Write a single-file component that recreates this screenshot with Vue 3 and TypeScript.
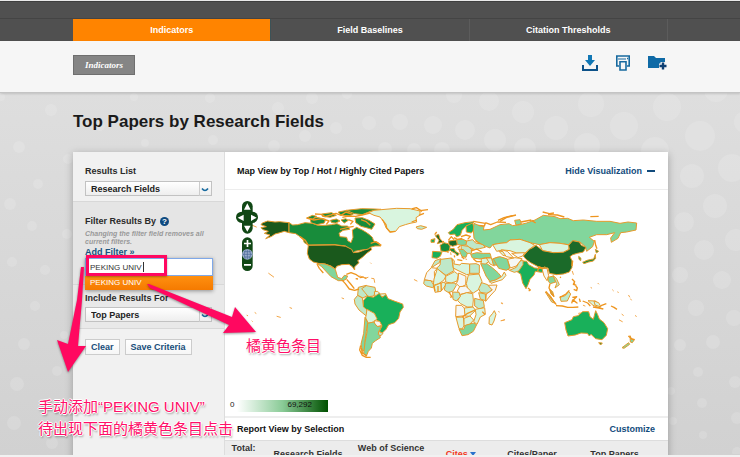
<script setup lang="ts">
import { ref } from 'vue'

interface Shape { d: string; f: string }
interface Region { x: number; y: number; shapes: Shape[]; lines: string[]; islands: string[] }

const DARK = '#1a591c'
const DEEP = '#1b6a29'
const GREEN = '#188c3b'
const MID = '#19b05a'
const SOFT = '#82d69c'
const PALE = '#bfe8c9'
const FAINT = '#d9f5df'
const NONE = '#f5f7f5'

const tabs = ['Indicators', 'Field Baselines', 'Citation Thresholds']
const activeTab = ref('Indicators')
const filterText = ref('PEKING UNIV')
const resultsList = ref('Research Fields')
const includeFor = ref('Top Papers')

const dots: number[][] = [
  [1, 97, 4], [51, 110, 6], [134, 97, 4], [210, 98, 5], [278, 108, 6], [312, 98, 6], [347, 94, 5], [19, 147, 6], [100, 126, 5],
  [145, 143, 4], [213, 140, 5], [305, 136, 6], [336, 128, 6], [274, 146, 6], [369, 123, 7], [400, 122, 8],
  [433, 125, 9], [454, 95, 8], [465, 130, 10], [489, 101, 10], [523, 112, 11], [556, 128, 12], [591, 104, 13],
  [624, 126, 14], [667, 107, 14], [700, 136, 15], [716, 90, 12], [495, 140, 11], [525, 149, 11], [587, 146, 13],
  [655, 151, 14], [385, 149, 7], [414, 150, 7], [442, 150, 8], [745, 122, 11],
  [68, 159, 5], [38, 184, 5], [10, 204, 6], [67, 234, 5], [32, 226, 5], [12, 262, 5], [45, 270, 5], [35, 306, 5], [24, 344, 6],
  [57, 371, 5], [17, 384, 7], [14, 423, 7], [52, 443, 6], [64, 335, 4],
  [692, 176, 12], [732, 168, 14], [715, 206, 12], [684, 222, 10], [736, 240, 11], [704, 250, 10], [680, 275, 8],
  [722, 280, 9], [696, 308, 8], [734, 318, 8], [713, 342, 7], [680, 345, 6], [698, 372, 5], [735, 382, 6],
  [671, 391, 4], [702, 403, 5], [737, 418, 6], [673, 421, 4], [703, 435, 4], [737, 452, 5],
]

const regions: Region[] = [
  {
    x: 0, y: 0,
    shapes: [
      { d: 'M112 99L128 93L150 96L164 95L192 98L192 128L178 124L165 128L150 132L140 139L122 146L135 135L118 130L130 124L114 119L108 113L124 110L108 104Z', f: DARK },
      { d: 'M192 98L203 105L218 104L240 98L262 100L278 106L300 106L320 104L336 101L350 108L368 108L374 118L354 121L342 130L345 140L365 142L368 152L378 158L384 142L382 120L395 112L412 120L422 126L432 133L442 142L446 153L460 158L468 168L450 168L436 172L430 178L410 180L390 184L384 190L378 180L362 168L330 164L250 165L238 158L234 148L225 140L212 131L192 128Z', f: GREEN },
      { d: 'M250 166L330 165L362 169L380 178L385 188L402 186L418 180L430 177L437 172L440 179L425 190L412 202L398 212L402 218L389 230L389 240L382 230L372 223L350 224L335 229L331 237L318 228L300 222L280 220L265 216L253 207L247 190Z', f: DARK },
      { d: 'M276 220L300 222L315 228L331 238L338 262L350 266L358 256L368 258L363 268L354 272L340 272L318 260L302 243L290 230Z', f: SOFT },
      { d: 'M256 88L276 82L302 88L298 99L276 104L258 98Z', f: GREEN },
      { d: 'M245 84L262 76L275 79L262 87Z', f: GREEN },
      { d: 'M290 72L320 68L334 76L316 82L292 79Z', f: GREEN },
      { d: 'M340 66L366 61L390 69L374 78L346 75Z', f: GREEN },
      { d: 'M364 61L410 56L450 57L468 58L436 64L412 74L388 71Z', f: GREEN },
      { d: 'M390 84L412 83L432 91L450 102L440 118L424 113L408 109L392 98Z', f: GREEN },
      { d: 'M316 91L334 87L345 93L332 99L320 98Z', f: GREEN },
      { d: 'M348 90L362 86L370 91L358 99Z', f: GREEN },
      { d: 'M400 292L424 286L432 298L428 316L414 324L398 316Z', f: PALE },
      { d: 'M410 296L424 287L450 292L452 304L446 318L430 320L420 308Z', f: PALE },
      { d: 'M448 305L458 304L466 312L482 311L484 320L450 322Z', f: FAINT },
      { d: 'M388 328L398 316L412 324L416 350L426 360L424 378L402 360L390 342Z', f: PALE },
      { d: 'M415 332L427 318L445 322L463 310L471 322L483 314L489 326L510 334L533 342L535 352L525 366L521 385L509 398L491 404L483 418L471 430L463 424L471 408L465 397L453 388L449 372L429 362L415 350Z', f: MID },
      { d: 'M426 358L448 370L456 386L446 396L430 400L422 384Z', f: FAINT },
      { d: 'M448 392L464 394L470 406L458 410L448 400Z', f: NONE },
      { d: 'M420 382L428 398L424 424L420 452L420 478L412 484L408 462L416 430Z', f: SOFT },
      { d: 'M428 400L446 396L456 409L469 409L462 424L466 443L452 452L442 460L439 474L430 484L424 498L416 490L420 458L426 426Z', f: SOFT },
      { d: 'M461 424L474 430L468 437L460 434Z', f: PALE },
    ],
    lines: [
      'M276 222L283 235L295 249', 'M350 269L361 281L373 297L389 301L402 297M365 268L377 282L388 296', 'M364 253L378 248L394 254L405 262',
      'M405 263L414 261L424 266M392 266L399 267', 'M407 466L404 480L412 496L424 502L437 502M409 474L412 489L426 498',
      'M245 84L267 90L290 86L312 93L304 103M270 72L290 73L300 80L318 75L333 70L348 76L363 66L380 72',
      'M352 82L370 78L392 79L411 75L432 70L461 64M408 89L424 95L436 106M370 89L384 94L376 103',
      'M225 140L241 151L250 166M345 118L366 113L386 109M437 160L452 155L469 166',
    ],
    islands: ['M80 105L94 111', 'M131 250L146 261', 'M66 376L68 377M90 368L93 370M81 393L82 394M156 379L166 382M195 353L200 355', 'M351 324L356 326'],
  },
  {
    x: 405, y: 0,
    shapes: [
      { d: 'M25 68L42 61L75 58L110 55L150 56L180 63L180 75L168 83L170 96L150 100L136 104L118 110L107 124L90 126L78 113L70 93L60 81L42 76Z', f: FAINT },
      { d: 'M168 111L182 107L200 112L185 118L172 116Z', f: PALE },
      { d: 'M226 137L236 133L240 146L249 156L232 161L237 151Z', f: DEEP },
      { d: 'M213 149L225 146L223 157L213 157Z', f: MID },
      { d: 'M265 128L280 118L291 104L315 98L342 95L335 104L318 108L306 121L301 136L290 141L284 132L270 134Z', f: MID },
      { d: 'M318 108L338 99L343 118L334 129L319 126Z', f: MID },
      { d: 'M240 166L252 158L264 161L270 169L269 182L256 185L243 183Z', f: GREEN },
      { d: 'M266 153L289 150L293 164L278 169L267 164Z', f: DEEP },
      { d: 'M218 184L246 186L241 199L231 205L216 203Z', f: MID },
      { d: 'M267 177L282 175L286 184L298 191L292 198L286 190L274 184Z', f: GREEN },
      { d: 'M290 149L309 148L322 154L318 165L303 166L292 163Z', f: SOFT },
      { d: 'M320 153L338 149L347 159L368 163L376 172L358 176L344 179L326 171L318 164Z', f: PALE },
      { d: 'M303 166L324 169L336 179L334 190L314 190L304 178Z', f: PALE },
      { d: 'M296 177L310 179L322 190L318 202L306 200Z', f: SOFT },
      { d: 'M332 193L350 188L370 190L390 190L394 203L377 203L360 207L337 204Z', f: SOFT },
      { d: 'M214 232L225 212L242 206L238 218L219 230Z', f: PALE },
      { d: 'M242 208L275 204L279 230L282 242L258 256L229 235L240 225Z', f: PALE },
      { d: 'M277 206L283 213L282 222L300 225L304 220L329 222L329 252L320 254L291 240L280 234Z', f: FAINT },
      { d: 'M329 222L348 221L358 225L358 250L329 250Z', f: PALE },
      { d: 'M214 233L232 235L223 245L224 275L193 269L200 248Z', f: NONE },
      { d: 'M232 236L258 258L251 271L236 281L220 286L222 267Z', f: FAINT },
      { d: 'M193 270L213 272L222 287L218 293L199 288L191 281Z', f: PALE },
      { d: 'M257 259L284 245L295 254L291 273L274 279L257 276Z', f: FAINT },
      { d: 'M223 287L240 280L254 276L257 285L243 304L225 307Z', f: FAINT },
      { d: 'M257 280L285 279L289 286L279 303L266 308L253 300Z', f: PALE },
      { d: 'M296 249L318 259L317 284L302 293L289 281L294 270Z', f: NONE },
      { d: 'M325 255L357 252L366 274L357 298L340 309L325 303L319 281Z', f: FAINT },
      { d: 'M365 278L383 284L397 300L381 310L361 307L356 296Z', f: PALE },
      { d: 'M384 286L411 285L406 301L390 318L377 334L379 312L397 300Z', f: NONE },
      { d: 'M299 290L317 288L334 305L318 309L301 313L292 303Z', f: NONE },
      { d: 'M302 314L320 308L338 311L340 330L338 351L321 351L302 341L293 332Z', f: FAINT },
      { d: 'M278 306L297 307L301 320L289 333L279 328Z', f: PALE },
      { d: 'M344 325L370 332L373 350L359 358L344 348Z', f: PALE },
      { d: 'M356 308L376 312L377 332L361 327Z', f: PALE },
      { d: 'M288 346L304 346L313 354L317 377L287 380Z', f: NONE },
      { d: 'M313 354L339 351L347 361L328 379L315 378Z', f: FAINT },
      { d: 'M346 358L374 353L376 373L361 381L351 403L341 395L348 374Z', f: FAINT },
      { d: 'M288 382L310 381L313 406L306 417L297 416Z', f: FAINT },
      { d: 'M312 385L330 378L341 390L328 404L312 408Z', f: FAINT },
      { d: 'M297 417L311 418L316 406L340 399L350 404L340 424L324 434L306 437Z', f: SOFT },
      { d: 'M388 382L398 370L403 362L408 373L402 393L396 405L387 402Z', f: FAINT },
      { d: 'M362 221L378 219L398 234L414 248L423 259L407 270L390 275L378 258L370 239Z', f: SOFT },
      { d: 'M364 206L382 204L389 213L376 222L363 221Z', f: FAINT },
      { d: 'M379 204L394 204L403 228L390 222Z', f: FAINT },
      { d: 'M396 208L414 201L438 206L448 219L447 239L430 238L410 226L400 224Z', f: SOFT },
      { d: 'M388 275L407 270L425 260L433 246L438 256L427 269L393 280Z', f: FAINT },
    ],
    lines: [
      'M180 62L204 59M155 57L169 53L186 64M177 76L192 70M66 88L78 104L80 114L90 126L106 124M155 96L170 90',
      'M220 286L225 303M234 288L234 306M243 279L244 303M266 305L277 323M306 382L321 371L345 360M375 374L367 365',
      'M303 140L318 135L331 139L323 148M282 143L292 148L307 145M265 151L274 140L282 149M224 134L230 126M248 158L251 153M259 184L266 187',
      'M305 200L313 207M283 196L284 202M340 206L350 215L366 215M292 209L307 212M300 168L293 175M338 178L333 184M346 152L360 160M337 182L350 177L365 186',
      'M340 94L376 100L373 108L354 106M376 98L392 104L412 96L438 97M414 91L432 83L458 77',
    ],
    islands: ['M32 219L33 220', 'M163 269L171 273', 'M0 258L8 261L18 264L24 262M35 265L42 266L44 277', 'M271 320L272 323', 'M416 365L418 366M426 392L434 389M425 340L427 341', 'M272 188L273 194M317 207L320 208'],
  },
  {
    x: 825, y: 0,
    shapes: [
      { d: 'M-78 100L-60 108L-48 110L-50 120L-30 118L0 104L27 101L38 107L60 104L80 99L105 90L130 76L165 80L180 86L203 85L220 92L250 90L290 94L330 94L360 100L384 96L410 99L408 120L380 126L362 128L354 145L334 157L332 144L344 128L320 134L290 134L268 142L283 154L278 170L260 184L256 170L240 156L220 152L205 164L180 160L150 158L118 164L90 158L60 148L30 150L20 158L0 160L-22 164L-30 174L-45 168L-66 156L-78 146L-80 120Z', f: SOFT },
      { d: 'M-22 164L0 160L20 158L30 150L60 148L90 158L104 166L88 178L74 190L50 189L30 182L10 180L-10 184Z', f: FAINT },
      { d: 'M118 164L150 158L180 160L208 165L206 179L190 187L160 188L128 182Z', f: FAINT },
      { d: 'M70 198L88 178L100 172L108 166L121 176L128 182L160 188L190 187L208 178L206 166L218 152L238 156L244 166L258 172L250 186L232 190L218 194L210 200L216 212L216 232L208 246L190 252L170 254L148 250L144 234L118 232L92 218L78 208Z', f: DEEP },
      { d: 'M62 228L70 213L80 214L86 224L104 234L128 236L135 230L136 244L124 247L106 244L102 255L90 268L84 284L78 296L68 279L62 252L52 246Z', f: MID },
      { d: 'M28 241L49 232L59 214L69 210L69 224L56 243L43 247Z', f: PALE },
      { d: 'M22 208L45 203L66 206L49 228L31 234Z', f: NONE },
      { d: 'M-20 206L0 200L22 207L29 234L19 241L-4 235Z', f: SOFT },
      { d: 'M-4 183L18 186L33 201L9 196Z', f: FAINT },
      { d: 'M35 190L74 188L68 198L54 203Z', f: NONE },
      { d: 'M4 179L22 184L41 204L19 200Z', f: NONE },
      { d: 'M126 236L141 235L146 257L141 272L132 258Z', f: NONE },
      { d: 'M144 262L161 258L167 276L151 281L145 274Z', f: SOFT },
      { d: 'M159 257L169 265L178 284L165 294L170 281Z', f: PALE },
      { d: 'M180 320L194 318L206 304L212 312L202 333L183 334Z', f: PALE },
      { d: 'M136 306L150 316L166 340L155 336Z', f: PALE },
      { d: 'M149 298L158 305L162 320L153 312Z', f: SOFT },
      { d: 'M264 332L286 333L300 345L299 354L279 346Z', f: FAINT },
      { d: 'M282 333L296 338L303 351L285 345Z', f: FAINT },
      { d: 'M194 398L216 389L220 380L234 377L248 365L266 365L270 380L280 388L287 362L293 374L298 387L312 398L323 416L319 436L306 449L287 446L273 433L268 438L262 430L243 429L226 435L204 438L198 420Z', f: MID },
      { d: 'M296 458L307 459L302 465Z', f: GREEN },
      { d: 'M390 437L394 448L403 449L397 458L391 456Z', f: SOFT },
      { d: 'M366 473L386 458L389 463L372 475Z', f: SOFT },
      { d: 'M248 217L261 211L274 208L281 207L286 193L287 205L280 213L266 216L252 221Z', f: GREEN },
      { d: 'M236 199L243 205L242 212L237 208Z', f: MID },
      { d: 'M286 178L296 184L289 189Z', f: GREEN },
      { d: 'M44 91L60 89L64 102L48 105Z', f: SOFT },
    ],
    lines: [
      'M284 150L287 166L291 176M128 66L148 71L162 69M144 74L172 75L193 81M271 80L296 79M0 94L20 82L48 75M63 96L94 90M95 91L107 99',
      'M138 304L154 326L169 344M168 347L187 348L203 352L219 352L235 351M217 322L230 320L220 330L231 339L218 330L215 340',
      'M216 267L224 275L220 283L229 286M222 280L232 294L230 302L221 298M179 323L198 312L208 301',
      'M238 326L241 336M248 333L263 339L271 348M303 347L319 341M279 351L297 354L310 357M150 281L147 294L154 307L162 320M128 236L117 230L113 243M84 294L91 300L86 303',
      'M218 212L216 228M180 261L183 263M333 348L342 352L351 358M385 438L396 447L404 449',
    ],
    islands: ['M217 244L220 253', 'M273 293L275 294M294 280L296 282M338 300L340 302M353 306L355 307M386 316L389 321M392 327L394 330M366 373L370 376M406 377L409 379M358 390L367 395', 'M250 346L255 348M236 370L241 369', 'M4 339L8 340M3 392L13 390'],
  },
]
</script>

<template>
  <div class="page">
    <svg class="dots" aria-hidden="true">
      <circle v-for="(c, i) in dots" :key="i" :cx="c[0]" :cy="c[1]" :r="c[2]" />
    </svg>

    <header class="top">
      <div class="strip"></div>
      <nav class="tabs">
        <a v-for="t in tabs" :key="t" href="#" class="tab" :class="{ active: t === activeTab }" @click.prevent="activeTab = t">{{ t }}</a>
      </nav>
    </header>

    <div class="toolbar">
      <button type="button" class="crumb">Indicators</button>
      <div class="tools">
        <button type="button" class="tool" aria-label="Download">
          <svg width="16" height="16" viewBox="0 0 16 16">
            <path d="M6 0H10V5H13L8 11L3 5H6Z" fill="#1278b5" />
            <path d="M1 10V15H15V10" fill="none" stroke="#0d5289" stroke-width="2" />
          </svg>
        </button>
        <button type="button" class="tool" aria-label="Print">
          <svg width="16" height="16" viewBox="0 0 16 16" fill="none" stroke="#17699f">
            <path d="M4 11H1.8V1H14.2V11H12" stroke-width="1.6" />
            <path d="M3 4H11" stroke-width="1" /><path d="M12 3.5H13" stroke-width="1.6" />
            <path d="M5 6.8H11V15H5Z" fill="#f6f6f6" stroke-width="1.6" />
          </svg>
        </button>
        <button type="button" class="tool" aria-label="Add to folder">
          <svg width="19" height="16" viewBox="0 0 19 16">
            <path d="M0 1H6L8 3H17V8H13V11H11V13H0Z" fill="#0f6aa6" />
            <path d="M15 7V15M11 11H19" stroke="#f6f6f6" stroke-width="5" />
            <path d="M15 7.5V14.5M11.5 11H18.5" stroke="#0d3f73" stroke-width="2.4" />
          </svg>
        </button>
      </div>
    </div>

    <main class="main">
      <h1>Top Papers by Research Fields</h1>
      <div class="card">
        <aside class="side">
          <section class="block">
            <label for="list" class="label">Results List</label>
            <div class="pick">
              <select id="list" v-model="resultsList"><option>Research Fields</option></select>
              <svg class="chev" width="12" height="14" viewBox="0 0 12 14"><path d="M0.5 0V14" stroke="#ccc" /><path d="M3 6.5Q6 10.5 9 6.5" fill="none" stroke="#15699e" stroke-width="1.6" /></svg>
            </div>
          </section>

          <section class="block filter">
            <div class="label row">
              <label for="filter">Filter Results By</label>
              <button type="button" class="help" aria-label="Help">?</button>
            </div>
            <p class="note">Changing the filter field removes all current filters.</p>
            <a href="#" class="add" @click.prevent>Add Filter »</a>
            <div class="suggest">
              <input id="filter" v-model="filterText" type="text" autocomplete="off" />
              <button type="button" class="option">PEKING UNIV</button>
              <span class="caret"></span>
              <span class="mark"></span>
            </div>
          </section>

          <section class="block include">
            <label for="include" class="label">Include Results For</label>
            <div class="pick">
              <select id="include" v-model="includeFor"><option>Top Papers</option></select>
              <svg class="chev" width="12" height="14" viewBox="0 0 12 14"><path d="M0.5 0V14" stroke="#ccc" /><path d="M3 6.5Q6 10.5 9 6.5" fill="none" stroke="#15699e" stroke-width="1.6" /></svg>
            </div>
          </section>

          <div class="actions">
            <button type="button">Clear</button>
            <button type="button">Save Criteria</button>
          </div>
        </aside>

        <div class="content">
          <div class="bar mapbar">
            <h2>Map View by Top / Hot / Highly Cited Papers</h2>
            <button type="button" class="link">Hide Visualization<span class="dash"></span></button>
          </div>
          <div class="map">
            <svg class="world" viewBox="0 0 1329 600" role="img" aria-label="World map">
              <g v-for="(r, i) in regions" :key="i" :transform="`translate(${r.x} ${r.y})`">
                <path v-for="(s, j) in r.shapes" :key="j" :d="s.d" :fill="s.f" class="land" />
                <path v-for="(l, j) in r.lines" :key="j" :d="l" class="coast" />
                <path v-for="(l, j) in r.islands" :key="j" :d="l" class="isle" />
              </g>
              <g class="ctrl">
                <rect x="51" y="33" width="32" height="98" rx="16" />
                <rect x="33" y="65" width="66" height="34" rx="17" />
                <rect x="51" y="142" width="32" height="101" rx="16" />
                <path class="w" d="M67 40L77 59H57ZM67 125L57 107H77ZM38 83L56 74V93ZM95 83L78 74V93ZM57 158H65V150H70V158H78V163H70V171H65V163H57ZM57 222H78V227H57Z" />
                <circle cx="67" cy="193" r="16" fill="#9aaccc" />
                <path d="M53 193H81M67 179V207M57 185H77M57 201H77M61 181Q53 193 61 206M73 181Q81 193 73 206" fill="none" stroke="#476795" stroke-width="2" />
              </g>
            </svg>
            <div class="legend"><span>0</span><div class="scale">69,292</div></div>
          </div>
          <div class="bar report">
            <h2>Report View by Selection</h2>
            <a href="#" class="link" @click.prevent>Customize</a>
          </div>
          <table>
            <thead>
              <tr>
                <th class="total">Total:<br />22</th>
                <th class="fields">Research Fields</th>
                <th class="docs">Web of Science<br />Documents</th>
                <th class="cites">Cites <i></i></th>
                <th class="ratio">Cites/Paper</th>
                <th class="papers">Top Papers</th>
              </tr>
            </thead>
          </table>
        </div>
      </div>
    </main>

    <svg class="arrows" aria-hidden="true">
      <path d="M81 267L84 267L82 300L78 346L86 346L68 372L57 340L68 344L77 300Z" />
      <path d="M147 284L149 284L232 317L235 307L256 332L223 333L229 325L150 288Z" />
    </svg>
    <p class="callout steps" lang="zh">手动添加“PEKING UNIV”<br />待出现下面的橘黄色条目点击</p>
    <p class="callout item" lang="zh">橘黄色条目</p>
  </div>
</template>

<style>
body { margin: 0; background: #f1f1f1; }
</style>

<style scoped>
* { box-sizing: border-box; }
.page {
  position: relative;
  height: 100vh;
  overflow: hidden;
  border-top: 1px solid #e9e9e9;
  border-bottom: 2px solid #f1f1f1;
  background: linear-gradient(#dedede 20%, #d1d1d1);
  font: bold 9px/12px "Liberation Sans", "Noto Sans CJK SC", sans-serif;
  color: #222;
}
button, input, select { font: inherit; }
.dots { position: absolute; top: -1px; left: 0; width: 100%; height: 100%; fill: #fff; fill-opacity: 0.14; }
.top { position: relative; background: #505050; }
.strip { height: 18px; border-top: 1px solid #3f3f3f; border-bottom: 1px solid #444; }
.tabs { display: flex; height: 22px; margin: 0 72px 0 73px; }
.tab { flex: 1; display: grid; place-items: center; border-right: 1px solid #5c5c5c; color: #fff; text-decoration: none; }
.tab.active { background: #ff8400; border-right-color: #3c5257; }
.toolbar {
  position: relative;
  display: flex;
  justify-content: space-between;
  height: 52px;
  padding: 14px 73px 0;
  background: #f6f6f6;
  border-bottom: 1px solid #c4c4c4;
  box-shadow: 0 1px 2px #0002;
}
.crumb { height: 20px; padding: 0 11px; border: 1px solid #6f6f6f; background: #858585; color: #fff; font: italic bold 9px/12px "Liberation Serif", serif; }
.tools { display: flex; gap: 16px; align-items: flex-start; }
.tool { padding: 0; border: 0; background: none; display: flex; min-width: 17px; }
.tool svg { display: block; }
.main { position: relative; padding: 18px 72px 0 73px; }
h1 { margin: 0 0 20px; font-size: 17px; line-height: 21px; color: #1a1a1a; }
.card { display: flex; height: 330px; background: #fff; box-shadow: 0 2px 8px #0004; }
.side { width: 152px; flex: none; background: #f1f1f1; border-right: 1px solid #ddd; }
.block { padding: 0 12px; border-bottom: 1px solid #d8d8d8; height: 50px; padding-top: 13px; }
.label { display: block; line-height: 12px; color: #2a2a2a; }
.pick { position: relative; margin-top: 4px; height: 15px; }
.pick select { display: block; appearance: none; width: 100%; height: 15px; padding: 0 16px 0 5px; border: 1px solid #c2c2c2; border-radius: 0; background: linear-gradient(#fff, #eee); color: #222; outline: 0; }
.chev { position: absolute; right: 1px; top: 1px; pointer-events: none; }
.filter { height: 83px; background: #e5e5e5; }
.row { display: flex; align-items: center; gap: 4px; }
.help { width: 9px; height: 9px; padding: 0; border: 0; border-radius: 50%; background: #0e4a80; color: #fff; font-size: 8px; line-height: 9px; }
.note { margin: 3px 0 0; font-size: 7px; line-height: 8px; font-style: italic; color: #999; }
.add { display: block; color: #15527f; text-decoration: none; line-height: 12px; }
.suggest { position: absolute; z-index: 2; left: 85px; top: 165px; width: 128px; box-shadow: 0 1px 4px #0006; }
.suggest input { display: block; width: 100%; height: 18px; padding: 0 4px; border: 1px solid #7fa8e8; background: #fff; color: #333; font-weight: normal; font-size: 8px; outline: 0; }
.option { display: block; width: 100%; height: 14px; padding: 0 5px; border: 0; text-align: left; background: linear-gradient(#ff9010, #f57a00); color: #fff; font-weight: normal; font-size: 8px; }
.caret { position: absolute; left: 58px; top: 4px; width: 1px; height: 10px; background: #333; }
.mark { position: absolute; left: 1px; top: -3px; width: 81px; height: 21px; border: 3px solid #ff0860; box-shadow: 0 1px 2px #0005; }
.include { height: 44px; background: #e9e9e9; padding-top: 7px; }
.include .pick { margin-top: 3px; }
.actions { display: flex; gap: 5px; padding: 10px 12px; }
.actions button { height: 16px; padding: 0 5px; border: 1px solid #ccc; background: linear-gradient(#fff, #f6f6f6); color: #174d7a; line-height: 12px; }
.content { flex: 1; min-width: 0; background: #fff; }
.bar { display: flex; align-items: center; justify-content: space-between; padding: 0 13px 0 12px; border-bottom: 1px solid #ededed; }
.mapbar { height: 38px; }
h2 { margin: 0; font-size: 9px; line-height: 12px; color: #111; }
.link { padding: 0; border: 0; background: none; display: flex; align-items: center; gap: 5px; color: #124b7c; text-decoration: none; }
.dash { width: 8px; height: 2px; background: #124b7c; }
.map { height: 228px; border-bottom: 2px solid #eee; }
.world { display: block; width: 100%; height: 200px; }
.land { stroke: #e79a2c; stroke-width: 3; stroke-linejoin: round; }
.coast { fill: none; stroke: #ee951f; stroke-width: 4; stroke-linejoin: round; }
.isle { fill: none; stroke: #f3a748; stroke-width: 3; stroke-linecap: round; }
.ctrl rect { fill: #104714; }
.ctrl .w { fill: #fff; }
.legend { display: flex; gap: 3px; margin: 10px 0 0 5px; font-weight: normal; font-size: 8px; line-height: 10px; }
.scale { width: 91px; height: 12px; padding-left: 50px; background: linear-gradient(90deg, #fff, #8acb97 50%, #005000); color: #111; }
.report { height: 23px; border-bottom-color: #ddd; }
table { width: 100%; table-layout: fixed; border-collapse: collapse; background: #ececec; }
th { height: 26px; padding: 0; line-height: 11px; text-align: center; white-space: nowrap; color: #333; vertical-align: middle; }
.total { width: 37px; }
.fields { width: 92px; }
.docs { width: 74px; }
.cites { width: 66px; color: #f23a22; }
.cites i { display: inline-block; border: 3px solid transparent; border-top: 4px solid #2a72cc; border-bottom: 0; vertical-align: middle; }
.ratio { width: 76px; }
.papers { padding-right: 9px; }
.arrows { position: absolute; z-index: 3; top: -1px; left: 0; width: 100%; height: 100%; pointer-events: none; fill: #ff0860; filter: drop-shadow(0 1px 1px #0006); }
.callout {
  position: absolute;
  z-index: 4;
  margin: 0;
  color: #ff0f68;
  font: normal 15px/22px "Liberation Sans", "Noto Sans CJK SC", sans-serif;
  white-space: nowrap;
  text-shadow: 1px 0 #fff, -1px 0 #fff, 0 1px #fff, 0 -1px #fff, 1px 2px 2px #0006;
}
.steps { left: 38px; top: 395px; }
.item { left: 246px; top: 334px; }
</style>
